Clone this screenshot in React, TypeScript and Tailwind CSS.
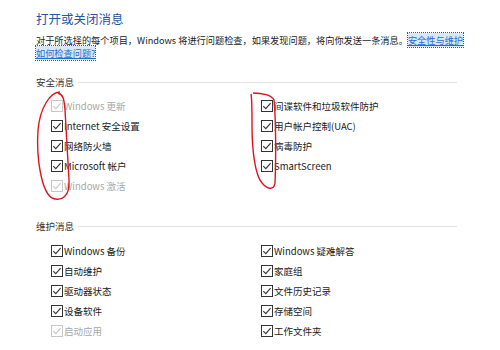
import React from "react";

const font = { fontFamily: '"Microsoft YaHei", "Noto Sans CJK SC", "Noto Sans", sans-serif' };

function Box({ disabled }: { disabled?: boolean }) {
  return (
    <svg width="12" height="12" viewBox="0 0 12 12" className="shrink-0">
      <rect x="0.5" y="0.5" width="11" height="11" fill="white" stroke={disabled ? "#c8c8c8" : "#333"} strokeWidth="1" />
      <path d="M2.3 6.2 L4.8 8.6 L9.6 3.2" fill="none" stroke={disabled ? "#c8c8c8" : "#333"} strokeWidth="1.1" />
    </svg>
  );
}

function Item({ label, disabled }: { label: string; disabled?: boolean }) {
  return (
    <div className="flex h-[20px] items-center">
      <Box disabled={disabled} />
      <span className={disabled ? "ml-[1px] text-[9.5px] text-[#a8a8a8]" : "ml-[1px] text-[9.5px] text-[#1a1a1a]"}>{label}</span>
    </div>
  );
}

function Header({ title }: { title: string }) {
  return (
    <div className="flex h-[14px] items-center">
      <span className="text-[9.5px] text-[#333]">{title}</span>
      <div className="ml-[4px] h-px flex-1 bg-[#e3e3e3]" />
    </div>
  );
}

function Cols({ left, right }: { left: [string, boolean?][]; right: [string, boolean?][] }) {
  return (
    <div className="flex pl-[15px]">
      <div className="w-[210px] flex flex-col">
        {left.map(([l, d]) => (
          <Item key={l} label={l} disabled={d} />
        ))}
      </div>
      <div className="flex flex-col">
        {right.map(([l, d]) => (
          <Item key={l} label={l} disabled={d} />
        ))}
      </div>
    </div>
  );
}

export default function App() {
  return (
    <div className="relative w-[500px] h-[350px] bg-white overflow-hidden" style={font}>
      <div className="pl-[36px] pr-[43px] pt-[10px]">
        <div className="text-[12.5px] leading-[18px] text-[#2456a4]">打开或关闭消息</div>
        <div className="mt-[6px] text-[9.2px] leading-[13px] text-[#1a1a1a] whitespace-nowrap">
          对于所选择的每个项目，Windows 将进行问题检查，如果发现问题，将向你发送一条消息。
          <span className="text-[#1f6fd0] underline outline-1 outline-dotted outline-[#555] bg-[#d9e8f8]">安全性与维护</span>
        </div>
        <div className="text-[9.2px] leading-[13px] whitespace-nowrap">
          <span className="text-[#1f6fd0] underline outline-1 outline-dotted outline-[#555] bg-[#d9e8f8]">如何检查问题?</span>
        </div>
        <div className="mt-[15px]">
          <Header title="安全消息" />
        </div>
        <div className="mt-[7px]">
          <Cols
            left={[["Windows 更新", true], ["Internet 安全设置"], ["网络防火墙"], ["Microsoft 帐户"], ["Windows 激活", true]]}
            right={[["间谍软件和垃圾软件防护"], ["用户帐户控制(UAC)"], ["病毒防护"], ["SmartScreen"]]}
          />
        </div>
        <div className="mt-[23px]">
          <Header title="维护消息" />
        </div>
        <div className="mt-[8px]">
          <Cols
            left={[["Windows 备份"], ["自动维护"], ["驱动器状态"], ["设备软件"], ["启动应用", true]]}
            right={[["Windows 疑难解答"], ["家庭组"], ["文件历史记录"], ["存储空间"], ["工作文件夹"]]}
          />
        </div>
      </div>
      <svg className="absolute left-0 top-0 pointer-events-none" width="500" height="350">
        <path
          d="M60 92 C50 92 40 108 38 130 C36 160 42 192 52 198 C62 202 70 196 69 180 C68 160 66 130 65 110 C64 100 64 95 58 93"
          fill="none"
          stroke="#e0141e"
          strokeWidth="1.4"
        />
        <path
          d="M253 93 C262 93 272 95 274 100 C276 120 276 160 275 183 C274 190 268 190 262 183 C255 175 252 150 252 125 C252 110 252 98 251 94"
          fill="none"
          stroke="#e0141e"
          strokeWidth="1.4"
        />
      </svg>
    </div>
  );
}
